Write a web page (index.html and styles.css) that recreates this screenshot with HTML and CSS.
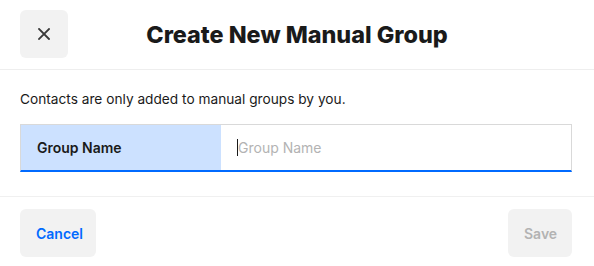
FILE: index.html
```html
<!DOCTYPE html>
<html>
<head>
<meta charset="utf-8">
<link rel="stylesheet" href="styles.css">
</head>
<body>
<div class="dialog">
  <header class="header">
    <button class="close-btn" aria-label="Close">
      <svg width="12" height="12" viewBox="0 0 12 12"><path d="M1 1L11 11M11 1L1 11" stroke="#3a3a3a" stroke-width="1.8" stroke-linecap="square"/></svg>
    </button>
    <h1 class="title">Create New Manual Group</h1>
  </header>
  <main class="content">
    <p class="note">Contacts are only added to manual groups by you.</p>
    <div class="field">
      <div class="field-label">Group Name</div>
      <div class="field-input"><span class="caret"></span><span class="placeholder">Group Name</span></div>
    </div>
  </main>
  <footer class="footer">
    <button class="btn btn-cancel">Cancel</button>
    <button class="btn btn-save">Save</button>
  </footer>
</div>
</body>
</html>
```
FILE: styles.css
```css
* { box-sizing: border-box; }
html, body { margin: 0; padding: 0; background: #fff; }
body { font-family: Inter, "Liberation Sans", sans-serif; color: #1a1a1a; width: 594px; height: 266px; overflow: hidden; }
.dialog { display: flex; flex-direction: column; }
.header {
  position: relative;
  display: flex;
  align-items: center;
  padding: 10px 20px 11px;
  border-bottom: 1px solid #eeeeee;
  height: 70px;
}
.close-btn {
  width: 48px; height: 48px; border: 0; border-radius: 6px;
  background: #f2f2f2; display: flex; align-items: center; justify-content: center;
  padding: 0; flex: none;
}
.title {
  position: absolute; left: 0; right: 0; top: 0; bottom: 0;
  margin: 0; display: flex; align-items: center; justify-content: center;
  font-size: 23.4px; font-weight: 800; letter-spacing: 0; color: #1a1a1a;
  pointer-events: none;
  padding-bottom: 1px;
}
.content { padding: 20px 22px 24px 20px; border-bottom: 1px solid #f0f0f0; }
.note { margin: 0 0 16px; font-size: 13.7px; line-height: 18px; color: #1a1a1a; }
.field {
  display: flex; height: 48px;
  border: 1px solid #d9d9d9; border-bottom: 2px solid #006aff;
}
.field-label {
  width: 200px; background: #cce1ff; display: flex; align-items: center;
  padding-left: 16px; font-size: 14px; font-weight: 600; color: #1a1a1a;
}
.field-input {
  flex: 1; display: flex; align-items: center; padding-left: 16px;
  font-size: 14px; color: #b3b3b3; padding-bottom: 1px;
}
.caret { width: 1px; height: 17px; background: #1a1a1a; margin-right: 0; }
.footer { display: flex; justify-content: space-between; padding: 12px 22px 9px 20px; }
.btn {
  height: 48px; border: 0; border-radius: 6px; background: #f2f2f2;
  font-family: Inter, "Liberation Sans", sans-serif; font-size: 14px; font-weight: 600;
  padding: 0 16px;
}
.btn-cancel { color: #006aff; width: 76px; }
.btn-save { color: #b3b3b3; width: 64px; }
```
